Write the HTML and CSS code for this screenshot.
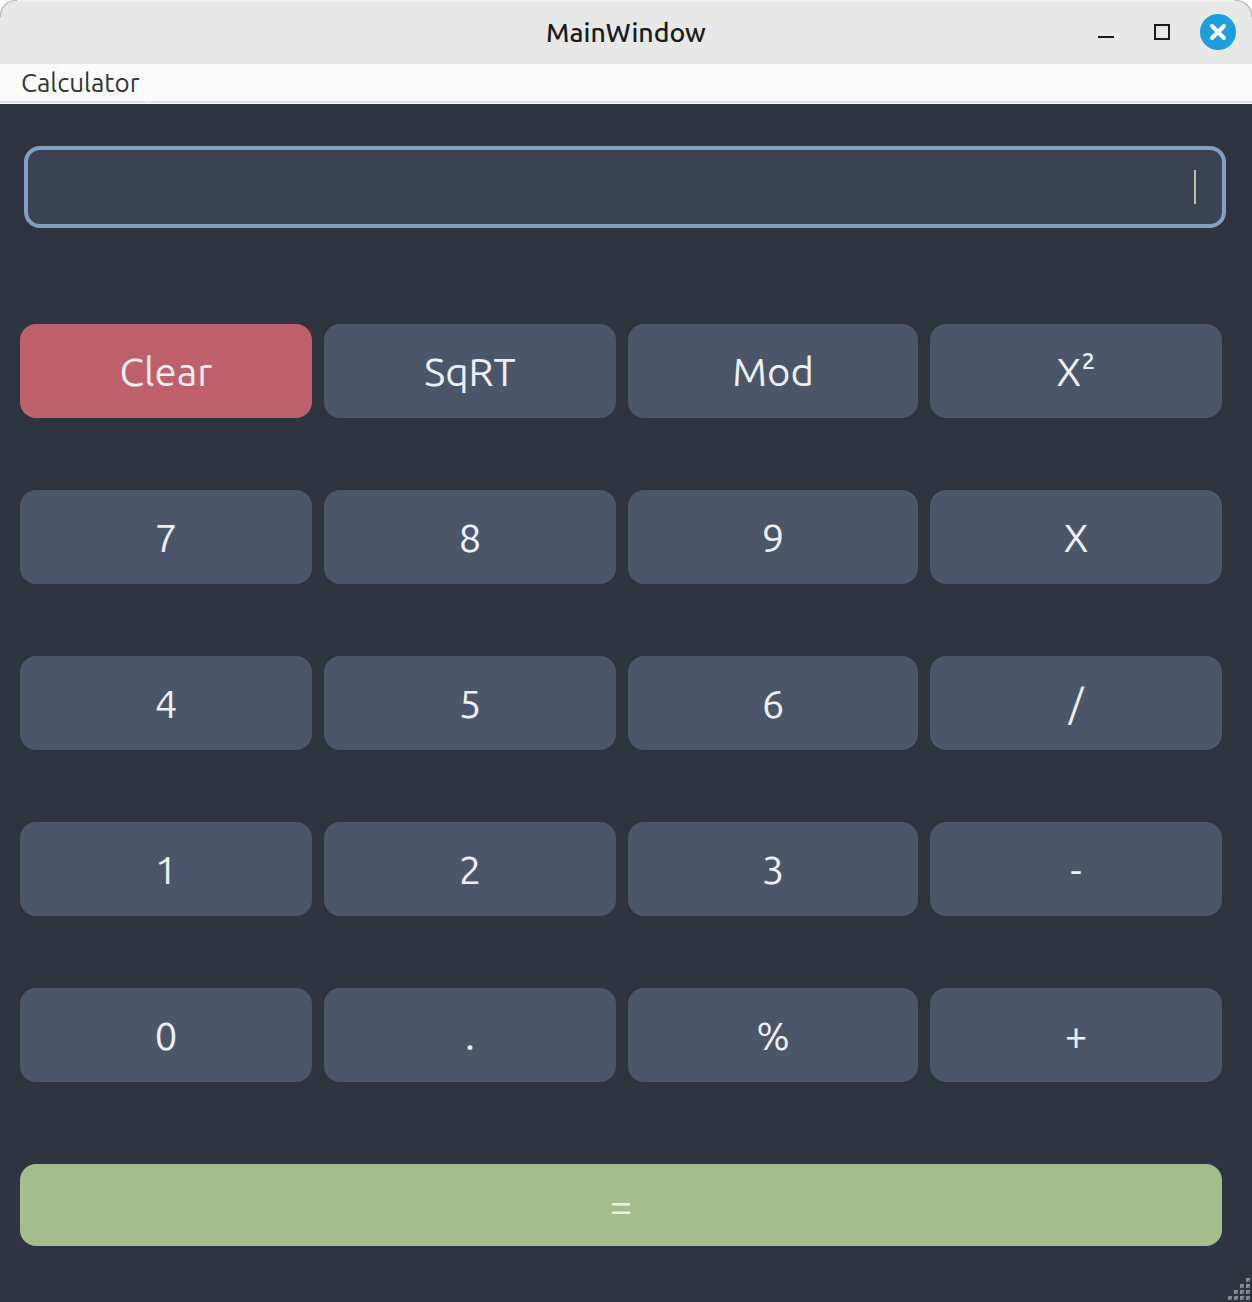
FILE: index.html
```html
<!DOCTYPE html>
<html lang="en">
<head>
<meta charset="utf-8">
<title>MainWindow</title>
<link rel="stylesheet" href="styles.css">
</head>
<body>
<div class="window">
  <header class="titlebar">
    <h1 class="title">MainWindow</h1>
    <div class="controls">
      <svg class="control" viewBox="0 0 36 36"><path d="M10 23h16" fill="none" stroke="#1b1b1b" stroke-width="2"/></svg>
      <svg class="control" viewBox="0 0 36 36"><rect x="11" y="11" width="14" height="14" fill="none" stroke="#1b1b1b" stroke-width="2"/></svg>
      <svg class="control" viewBox="0 0 36 36"><circle cx="18" cy="18" r="18" fill="#1f9ede"/><path d="M12 12l12 12M24 12L12 24" fill="none" stroke="#fff" stroke-width="4" stroke-linecap="round"/></svg>
    </div>
  </header>
  <nav class="menubar"><span class="menu-item">Calculator</span></nav>
  <main class="body">
    <div class="display"><span class="caret"></span></div>
    <div class="keys">
      <button class="key clear">Clear</button><button class="key">SqRT</button><button class="key">Mod</button><button class="key">X²</button>
      <button class="key">7</button><button class="key">8</button><button class="key">9</button><button class="key">X</button>
      <button class="key">4</button><button class="key">5</button><button class="key">6</button><button class="key">/</button>
      <button class="key">1</button><button class="key">2</button><button class="key">3</button><button class="key">-</button>
      <button class="key">0</button><button class="key">.</button><button class="key">%</button><button class="key">+</button>
    </div>
    <button class="key equals">=</button>
  </main>
  <svg class="grip" viewBox="0 0 22 22">
    <path fill="#868a91" d="M18 0h4v4h-4zM12 6h4v4h-4zM18 6h4v4h-4zM6 12h4v4H6zM12 12h4v4h-4zM18 12h4v4h-4zM0 18h4v4H0zM6 18h4v4H6zM12 18h4v4h-4zM18 18h4v4h-4z"/>
    <path fill="#6d7179" d="M20 2h2v2h-2zM14 8h2v2h-2zM20 8h2v2h-2zM8 14h2v2H8zM14 14h2v2h-2zM20 14h2v2h-2zM2 20h2v2H2zM8 20h2v2H8zM14 20h2v2h-2zM20 20h2v2h-2z"/>
  </svg>
</div>
</body>
</html>
```
FILE: styles.css
```css
* { box-sizing: border-box; }
body {
  margin: 0;
  background: #fff;
  font-family: Ubuntu, "Noto Sans", "Open Sans", sans-serif;
}
.window {
  position: relative;
  display: flex;
  flex-direction: column;
  width: 1252px;
  height: 1302px;
  background: #2e3440;
  border-radius: 16px 16px 0 0;
  overflow: hidden;
}
.titlebar {
  position: relative;
  display: grid;
  grid-template-columns: 1fr auto 1fr;
  align-items: center;
  height: 64px;
  padding: 0 16px;
  background: #e8e8e8;
  box-shadow: inset 0 2px 0 #f0f0f0;
}
/* grey rim on the rounded window corners */
.titlebar::before,
.titlebar::after {
  content: "";
  position: absolute;
  top: 0;
  width: 16px;
  height: 16px;
  border: 0 solid #b4b4b4;
}
.titlebar::before { left: 0; border-width: 1.5px 0 0 1.5px; border-radius: 16px 0 0 0; }
.titlebar::after { right: 0; border-width: 1.5px 1.5px 0 0; border-radius: 0 16px 0 0; }
.title {
  grid-column: 2;
  margin: 0;
  padding-bottom: 1px;
  font-size: 26.67px;
  font-weight: 500;
  line-height: 36px;
  color: #1b1b1b;
}
.controls { display: flex; justify-content: flex-end; gap: 20px; }
.control { display: block; width: 36px; height: 36px; }
.menubar {
  height: 40px;
  padding-left: 21px;
  background: linear-gradient(#fff, #fff) 147px 37px / 1px 3px no-repeat,
    linear-gradient(#fbfbfb 37px, #dfdfdf 37px 39px, #fff 39px);
}
.menu-item {
  display: block;
  font-size: 26px;
  font-weight: 400;
  line-height: 38px;
  color: #333;
}
.body { flex: 1; padding: 42px 30px 0 20px; }
.display {
  display: flex;
  align-items: center;
  justify-content: flex-end;
  width: 1202px;
  height: 82px;
  margin-left: 4px;
  padding-right: 26px;
  background: #3b4252;
  border: 4px solid #81a1c1;
  border-radius: 16px;
}
.caret { width: 2px; height: 34px; background: #c4bdad; }
.keys {
  display: grid;
  grid-template-columns: 292px 292px 290px 292px;
  grid-auto-rows: 94px;
  gap: 72px 12px;
  margin-top: 96px;
}
.key {
  padding: 2px 0 0;
  border: 0;
  border-radius: 16px;
  background: #4c566a;
  color: #eceff4;
  font-family: inherit;
  font-size: 40px;
  font-weight: 400;
  line-height: 54px;
}
.clear { background: #bf616a; }
.equals {
  display: block;
  width: 1202px;
  height: 82px;
  margin-top: 82px;
  background: #a3be8c;
}
.grip { position: absolute; right: 2px; bottom: 2px; width: 22px; height: 22px; }
```
